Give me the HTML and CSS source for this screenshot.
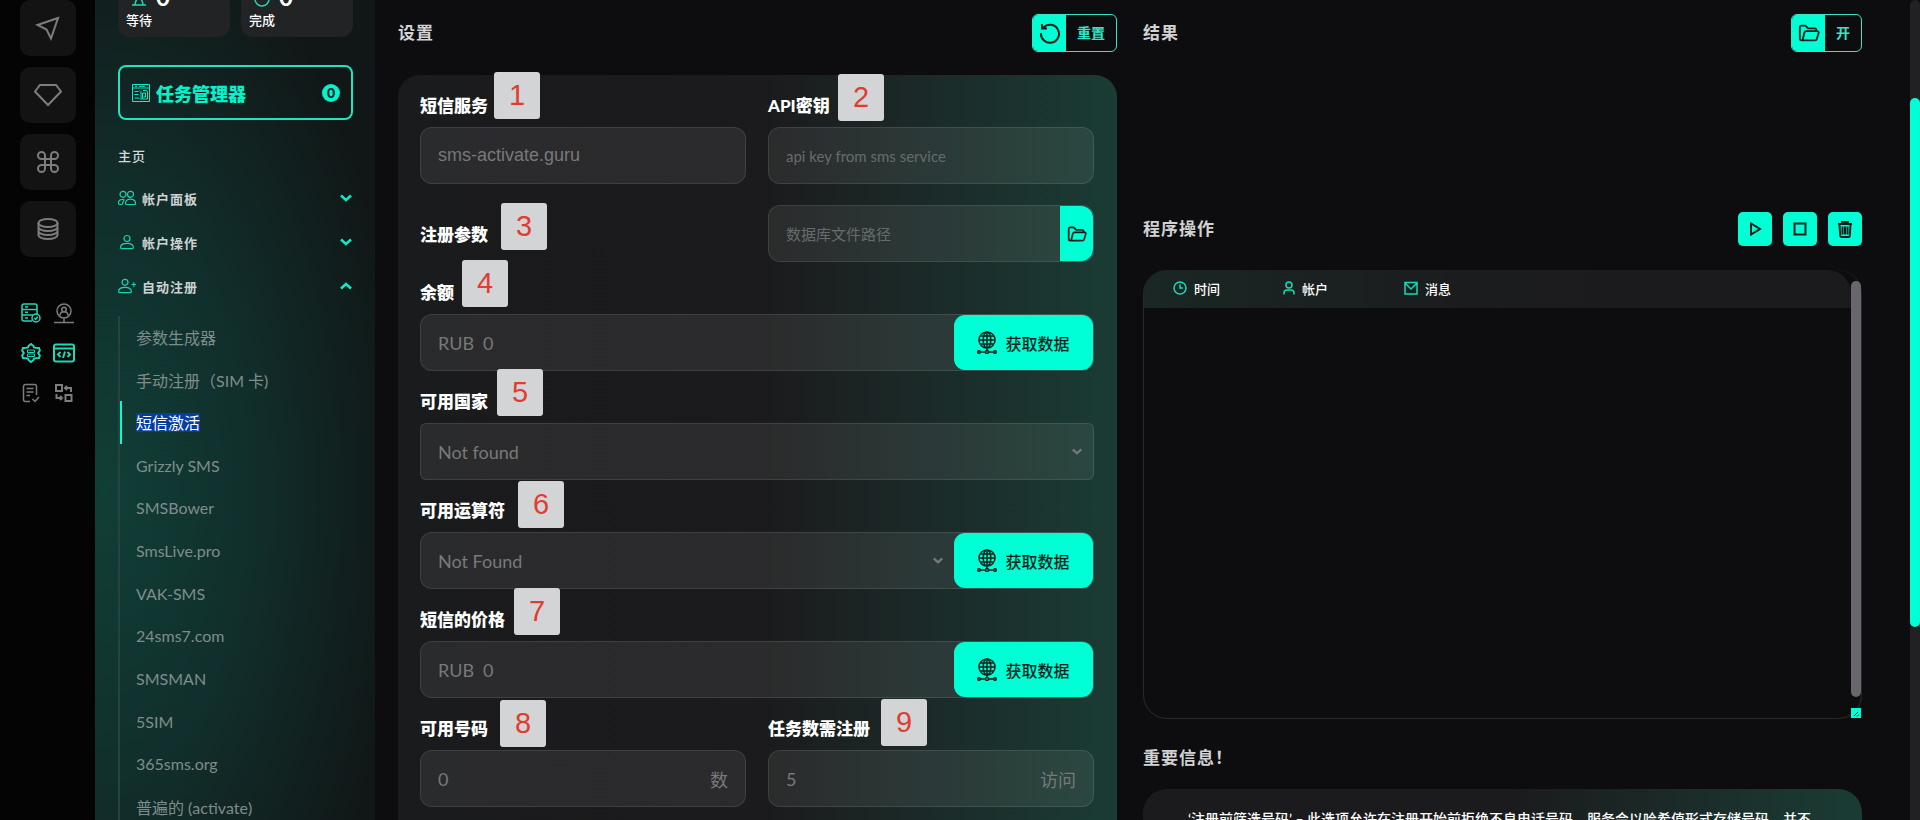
FILE: index.html
```html
<!DOCTYPE html>
<html lang="zh-CN">
<head>
    <meta charset="UTF-8">
    <meta name="viewport" content="width=device-width, initial-scale=1.0">
    <title>短信激活</title>
    <link rel="stylesheet" href="styles.css">
</head>
<body>
    <svg class="sprite" aria-hidden="true">
        <symbol id="i-folder" viewBox="0 0 24 24"><path d="M5 20H4a2 2 0 0 1-2-2V6a2 2 0 0 1 2-2h4l3 3h7a2 2 0 0 1 2 2v1M5 20l2-8.500a2 2 0 0 1 2-1.500h12a1.500 1.500 0 0 1 1.500 2L20.500 18.500a2 2 0 0 1-2 1.500H5z"/></symbol>
        <symbol id="i-down" viewBox="0 0 14 8"><path d="M2 1.500l5 4.500 5-4.500"/></symbol>
        <symbol id="i-up" viewBox="0 0 14 8"><path d="M2 6.500l5-4.500 5 4.500"/></symbol>
        <symbol id="i-user" viewBox="0 0 18 16"><circle cx="9" cy="4.500" r="3"/><path d="M2.600 13.600c0-3 2-4.300 6.400-4.300s6.400 1.300 6.400 4.300c0 .7-.5 1-1 1H3.600c-.5 0-1-.3-1-1z"/></symbol>
        <symbol id="i-globe" viewBox="0 0 20 23"><circle cx="10" cy="9" r="8"/><ellipse cx="10" cy="9" rx="3.800" ry="8"/><path d="M10 1v18.500M2 9h16M3.200 5h13.600M3.200 13h13.600M3.300 21h5.200M11.500 21h5.200"/><circle cx="2" cy="21" r="1.300"/><circle cx="10" cy="21" r="1.500"/><circle cx="18" cy="21" r="1.300"/></symbol>
    </svg>

    <div class="app">
        <nav class="rail">
            <a class="tile" href="#" aria-label="发送"><svg class="icon" width="26" height="26" viewBox="0 0 26 26"><path d="M23 3L2.500 10l9 4.500L16 23.500z"/></svg></a>
            <a class="tile" href="#" aria-label="高级"><svg class="icon" width="28" height="24" viewBox="0 0 28 24"><path d="M6 2h16l5 6.500L14 22 1 8.500z"/></svg></a>
            <a class="tile" href="#" aria-label="命令"><svg class="icon" width="22" height="22" viewBox="0 0 22 22"><path d="M8 8V4.500A3.500 3.500 0 1 0 4.500 8h13A3.500 3.500 0 1 0 14 4.500v13a3.500 3.500 0 1 0 3.500-3.500h-13A3.500 3.500 0 1 0 8 17.500z"/></svg></a>
            <a class="tile" href="#" aria-label="数据库"><svg class="icon" width="22" height="24" viewBox="0 0 22 24"><ellipse cx="11" cy="6" rx="9.500" ry="4"/><path d="M1.500 6v12c0 2.200 4 4 9.500 4s9.500-1.800 9.500-4V6M1.500 10c0 2.200 4 4 9.500 4s9.500-1.800 9.500-4M1.500 14c0 2.200 4 4 9.500 4s9.500-1.800 9.500-4"/></svg></a>

            <div class="tools">
                <svg class="icon on" width="20" height="20" viewBox="0 0 20 20"><path d="M11 18H3a2 2 0 0 1-2-2V3a2 2 0 0 1 2-2h11a2 2 0 0 1 2 2v8M1 6.500h15M1 12h11M4 4h3M4 9.300h3M4 15h3"/><circle cx="15" cy="15" r="4"/><path d="M13.300 15l1.300 1.300 2.200-2.500"/></svg>
                <svg class="icon" width="20" height="21" viewBox="0 0 20 21"><circle cx="10" cy="8" r="7"/><circle cx="10" cy="6.500" r="2.300"/><path d="M6 12.500c0-5 8-5 8 0M10 15v4M0 19.500h20M8.500 19.500h3"/></svg>
                <svg class="icon on thick" width="20" height="20" viewBox="0 0 20 20"><path d="M7.500 3L10 1l2.500 2 .5 1.500 1.500.3L18 5l.8 2.500L17.200 10l1.600 2.500L18 15l-3.500.2-1.500.3-.5 1.500L10 19l-2.500-2-.5-1.500-1.500-.3L2 15l-.8-2.500L2.800 10 1.200 7.500 2 5l3.500-.2L7 4.500z"/><path class="fine" d="M6.500 7h7v2.500h-7zM6.500 11h7v2.500h-7z"/></svg>
                <svg class="icon on thick" width="22" height="20" viewBox="0 0 22 20"><rect x="1" y="1.500" width="20" height="17" rx="2"/><path d="M1 5.500h20M7.500 9L5 11.500 7.500 14M14.500 9l2.500 2.500-2.500 2.500M12 8.500L10 15"/></svg>
                <svg class="icon" width="20" height="20" viewBox="0 0 20 20"><path d="M9 18.500H4.500a2 2 0 0 1-2-2v-13a2 2 0 0 1 2-2h9a2 2 0 0 1 2 2V12M5.500 5.500h7M5.500 9h7M5.500 12.500H9M11.500 16l2.500 2.500 4-4.500"/></svg>
                <svg class="icon thick" width="20" height="20" viewBox="0 0 20 20"><path d="M2 2h6v6H2zM11.500 12h6v6h-6zM11 5h6v4M13 3l-2 2 2 2M2.500 11v4h5M6 13l2 2-2 2"/></svg>
            </div>
        </nav>

        <aside class="sidebar">
            <div class="cards">
                <div class="card">
                    <div class="card-top"><svg class="icon" width="18" height="20" viewBox="0 0 18 20"><path d="M2 2h14M2 18h14M5 2c0 9 8 7 8 16M13 2c0 9-8 7-8 16"/></svg><b>0</b></div>
                    等待
                </div>
                <div class="card">
                    <div class="card-top"><svg class="icon" width="18" height="20" viewBox="0 0 18 20"><circle cx="9" cy="12" r="7"/></svg><b>0</b></div>
                    完成
                </div>
            </div>

            <button class="task-manager" type="button">
                <svg class="icon" width="18" height="18" viewBox="0 0 18 18"><path d="M.5.500h17v17H.5zM.5 4h17M3 2.300h2M7 2.300h6M2.500 7.500h4l1-1M2.500 10.500h4M2.500 14h4l1 1M9 7v9M11 6.500h3.500l1 1.500v7h-5V9h3v4h-2"/></svg>
                <span>任务管理器</span>
                <b class="count">0</b>
            </button>

            <h2 class="menu-title">主页</h2>
            <button class="group" type="button">
                <svg class="icon" width="18" height="16" viewBox="0 0 18 16"><circle cx="5" cy="4.300" r="3"/><circle cx="12.500" cy="4.300" r="3"/><path d="M7.500 13.500c0-3 2-4.300 5-4.300s5 1.300 5 4.300c0 .7-.5 1-1 1h-8c-.5 0-1-.3-1-1zM6.500 9.300C2.500 9 .5 10.500.5 13c0 1 .4 1.500 1.200 1.500H4L6 10"/></svg>
                <span>帐户面板</span>
                <svg class="icon chevron" width="14" height="8"><use href="#i-down"/></svg>
            </button>
            <button class="group" type="button">
                <svg class="icon" width="18" height="16"><use href="#i-user"/></svg>
                <span>帐户操作</span>
                <svg class="icon chevron" width="14" height="8"><use href="#i-down"/></svg>
            </button>
            <button class="group" type="button">
                <svg class="icon" width="18" height="16" viewBox="0 0 18 16"><circle cx="7" cy="4.300" r="3"/><path d="M.6 13.600c0-3 2-4.300 6.400-4.300s6.400 1.300 6.400 4.300c0 .7-.5 1-1 1H1.600c-.5 0-1-.3-1-1zM13.500 6.500h4.500M15.800 4.300v4.500"/></svg>
                <span>自动注册</span>
                <svg class="icon chevron" width="14" height="8"><use href="#i-up"/></svg>
            </button>

            <ul class="submenu">
                <li><a href="#">参数生成器</a></li>
                <li><a href="#">手动注册（SIM 卡)</a></li>
                <li class="active"><a href="#"><mark>短信激活</mark></a></li>
                <li><a href="#">Grizzly SMS</a></li>
                <li><a href="#">SMSBower</a></li>
                <li><a href="#">SmsLive.pro</a></li>
                <li><a href="#">VAK-SMS</a></li>
                <li><a href="#">24sms7.com</a></li>
                <li><a href="#">SMSMAN</a></li>
                <li><a href="#">5SIM</a></li>
                <li><a href="#">365sms.org</a></li>
                <li><a href="#">普遍的 (activate)</a></li>
            </ul>
        </aside>

        <main class="content">
            <section class="column">
                <header class="head">
                    <h1>设置</h1>
                    <button class="split-button" type="button">
                        <span class="split-icon"><svg class="icon" width="22" height="22" viewBox="0 0 22 22"><path d="M4.500 5.500A9 9 0 1 1 2 11M3 2v4.500h5"/></svg></span>
                        <span class="split-text">重置</span>
                    </button>
                </header>

                <form class="panel">
                    <div class="row two">
                        <div class="field">
                            <label for="service">短信服务</label>
                            <div class="box"><input class="arial" id="service" type="text" value="sms-activate.guru" readonly></div>
                        </div>
                        <div class="field">
                            <label for="key">API密钥</label>
                            <div class="box"><input class="small" id="key" type="text" placeholder="api key from sms service"></div>
                        </div>
                    </div>

                    <div class="row two params">
                        <label for="path">注册参数</label>
                        <div class="box">
                            <input class="small" id="path" type="text" placeholder="数据库文件路径">
                            <button class="folder-button" type="button" aria-label="选择文件"><svg class="icon" width="22" height="20"><use href="#i-folder"/></svg></button>
                        </div>
                    </div>

                    <div class="field">
                        <label for="balance">余额</label>
                        <div class="box">
                            <span class="prefix">RUB</span>
                            <input id="balance" type="text" value="0" readonly>
                            <button class="fetch" type="button"><svg class="icon" width="20" height="23"><use href="#i-globe"/></svg>获取数据</button>
                        </div>
                    </div>

                    <div class="field">
                        <label for="country">可用国家</label>
                        <div class="box square">
                            <select id="country"><option>Not found</option></select>
                            <svg class="icon caret" width="12" height="7"><use href="#i-down"/></svg>
                        </div>
                    </div>

                    <div class="field">
                        <label for="operator">可用运算符</label>
                        <div class="box">
                            <select id="operator"><option>Not Found</option></select>
                            <svg class="icon caret" width="12" height="7"><use href="#i-down"/></svg>
                            <button class="fetch" type="button"><svg class="icon" width="20" height="23"><use href="#i-globe"/></svg>获取数据</button>
                        </div>
                    </div>

                    <div class="field">
                        <label for="price">短信的价格</label>
                        <div class="box">
                            <span class="prefix">RUB</span>
                            <input id="price" type="text" value="0" readonly>
                            <button class="fetch" type="button"><svg class="icon" width="20" height="23"><use href="#i-globe"/></svg>获取数据</button>
                        </div>
                    </div>

                    <div class="row two">
                        <div class="field">
                            <label for="numbers">可用号码</label>
                            <div class="box"><input id="numbers" type="text" value="0"><span class="suffix">数</span></div>
                        </div>
                        <div class="field">
                            <label for="tasks">任务数需注册</label>
                            <div class="box"><input id="tasks" type="text" value="5"><span class="suffix">访问</span></div>
                        </div>
                    </div>

                    <!-- numbered notes over the form -->
                    <span class="note note-1">1</span>
                    <span class="note note-2">2</span>
                    <span class="note note-3">3</span>
                    <span class="note note-4">4</span>
                    <span class="note note-5">5</span>
                    <span class="note note-6">6</span>
                    <span class="note note-7">7</span>
                    <span class="note note-8">8</span>
                    <span class="note note-9">9</span>
                </form>
            </section>

            <section class="column">
                <header class="head result-head">
                    <h1>结果</h1>
                    <button class="split-button" type="button">
                        <span class="split-icon"><svg class="icon" width="22" height="22"><use href="#i-folder"/></svg></span>
                        <span class="split-text">开</span>
                    </button>
                </header>

                <header class="head">
                    <h1>程序操作</h1>
                    <div class="actions">
                        <button type="button" aria-label="开始"><svg class="icon" width="14" height="14" viewBox="0 0 14 14"><path d="M3 1.500v11L12 7z"/></svg></button>
                        <button type="button" aria-label="停止"><svg class="icon" width="14" height="14" viewBox="0 0 14 14"><path d="M1.500 1.500h11v11h-11z"/></svg></button>
                        <button type="button" aria-label="删除"><svg class="icon" width="16" height="18" viewBox="0 0 16 18"><path d="M1 4h14M5 4V2h6v2M2.500 4.500l.7 11a1.500 1.500 0 0 0 1.500 1.500h6.600a1.500 1.500 0 0 0 1.500-1.500l.7-11M5.500 6.500v8M8 6.500v8M10.500 6.500v8"/></svg></button>
                    </div>
                </header>

                <div class="log-wrap">
                    <div class="log">
                        <table>
                            <thead>
                                <tr>
                                    <th class="col-time"><span><svg class="icon" width="14" height="14" viewBox="0 0 14 14"><circle cx="7" cy="7" r="6"/><path d="M7 3.500V7h3"/></svg>时间</span></th>
                                    <th class="col-user"><span><svg class="icon" width="12" height="14" viewBox="0 0 12 14"><circle cx="6" cy="4" r="3"/><path d="M1 13.500V12c0-2 1.500-3 3-3h4c1.500 0 3 1 3 3v1.500"/></svg>帐户</span></th>
                                    <th><span><svg class="icon" width="14" height="14" viewBox="0 0 14 14"><path d="M1 1.500h12v11.500H1zM1 2l6 6 6-6"/></svg>消息</span></th>
                                </tr>
                            </thead>
                        </table>
                    </div>
                    <div class="log-bar"></div>
                    <div class="log-grip"><svg class="icon" width="10" height="10" viewBox="0 0 10 10"><path d="M3 8l4-4M6 8.500L8 6.500"/></svg></div>
                </div>

                <h1 class="info-title">重要信息！</h1>
                <div class="info">
                    <p>‘注册前筛选号码’ – 此选项允许在注册开始前拒绝不良电话号码，服务会以哈希值形式存储号码，并不</p>
                </div>
            </section>
        </main>

        <div class="page-bar"><div class="page-thumb"></div></div>
    </div>
</body>
</html>
```
FILE: styles.css
```css
* {
    box-sizing: border-box;
}

body {
    margin: 0;
    background-color: #0d0d10;
    color: #fff;
    font-family: Lato, 'Noto Sans CJK SC', sans-serif;
    font-size: 16px;
}

h1, h2, p, ul {
    margin: 0;
    padding: 0;
}

button, input, select {
    font-family: inherit;
    border: none;
    background: none;
    padding: 0;
    margin: 0;
    color: inherit;
}

button {
    cursor: pointer;
}

a {
    color: inherit;
    text-decoration: none;
}

.sprite {
    position: absolute;
    width: 0;
    height: 0;
}

.icon {
    fill: none;
    stroke: currentColor;
    stroke-width: 1.5;
    flex: none;
}

.app {
    display: flex;
    height: 100vh;
    overflow: hidden;
}

/* left rail */
.rail {
    width: 95px;
    flex: none;
    display: flex;
    flex-direction: column;
    align-items: flex-start;
    gap: 11px;
    padding-left: 20px;
    background-color: #040404;
    color: #7d7d7d;
}

.tile {
    width: 56px;
    height: 56px;
    flex: none;
    display: flex;
    justify-content: center;
    align-items: center;
    border-radius: 10px;
    background-color: #131313;
}

.tile .icon {
    stroke-width: 2;
}

.tools {
    display: grid;
    grid-template-columns: 22px 22px;
    grid-auto-rows: 22px;
    gap: 18px 11px;
    place-items: center;
    margin-top: 34px;
}

.tools .on {
    color: #1fd8b6;
}

.tools .thick {
    stroke-width: 2;
}

.tools .fine {
    stroke-width: 1;
}

/* sidebar */
.sidebar {
    width: 280px;
    flex: none;
    padding: 0 22px 0 23px;
    background: radial-gradient(ellipse 300px 600px at 10px 60%, #103f37 0%, #112e2b 50%, #111717 100%);
}

.cards {
    display: grid;
    grid-template-columns: 1fr 1fr;
    gap: 11px;
    margin-top: -32px;
}

.card {
    padding: 16px 8px 7px;
    border-radius: 12px;
    background-color: #212325;
    font-size: 13px;
    font-weight: 500;
    line-height: 20px;
}

.card-top {
    display: flex;
    align-items: center;
    gap: 8px;
    height: 26px;
    padding-left: 4px;
    color: #1fd8b6;
}

.card-top b {
    color: #fff;
    font-size: 24px;
    line-height: 26px;
}

.task-manager {
    display: flex;
    align-items: center;
    gap: 6px;
    width: 100%;
    height: 55px;
    margin-top: 28px;
    padding: 0 11px 0 12px;
    border: 2px solid #20e3c0;
    border-radius: 8px;
    color: #04f3cc;
    font-size: 18px;
    font-weight: 900;
}

.task-manager .icon {
    stroke-width: 1;
}

.count {
    width: 18px;
    height: 18px;
    margin-left: auto;
    border-radius: 50%;
    background-color: #04f3cc;
    color: #10201e;
    font-size: 14px;
    line-height: 18px;
    text-align: center;
}

.menu-title {
    margin: 26px 0 9px;
    color: #d5dad9;
    font-size: 13px;
    font-weight: 500;
    line-height: 21px;
    letter-spacing: 1px;
}

.group {
    display: flex;
    align-items: center;
    gap: 6px;
    width: 100%;
    height: 44px;
    color: #cdd3d2;
    font-size: 13px;
    font-weight: 700;
    letter-spacing: 1px;
}

.group .icon {
    color: #1fd0ad;
    stroke-width: 1.2;
}

.group .chevron {
    margin-left: auto;
    color: #10e8c4;
    stroke-width: 2.5;
}

.submenu {
    display: grid;
    grid-auto-rows: 1fr;
    height: 512px;
    margin-top: 8px;
    border-left: 2px solid #26433f;
    list-style: none;
    color: #7f8d8a;
}

.submenu li {
    display: flex;
    align-items: center;
    padding-left: 14px;
    border-left: 2px solid transparent;
}

.submenu .active {
    border-color: #00ffd5;
}

.submenu mark {
    background-color: #043e9f;
    color: #fff;
    line-height: 19px;
    display: block;
}

/* main area */
.content {
    flex: 1;
    display: grid;
    grid-template-columns: 1fr 1fr;
    gap: 26px;
    padding: 14px 48px 0 23px;
}

.column {
    display: flex;
    flex-direction: column;
    min-width: 0;
}

.head {
    display: flex;
    justify-content: space-between;
    align-items: center;
}

h1 {
    color: #d2d2d3;
    font-size: 17px;
    font-weight: 600;
    line-height: 24px;
    letter-spacing: 1px;
}

.split-button {
    display: flex;
    height: 38px;
    border: 1px solid #34e6c5;
    border-radius: 6px;
    overflow: hidden;
    color: #34e6c5;
    font-size: 14px;
    font-weight: 700;
}

.split-icon {
    display: flex;
    justify-content: center;
    align-items: center;
    width: 33px;
    height: 36px;
    background-color: #00ffd5;
    color: #08201c;
}

.split-icon .icon {
    stroke-width: 2;
}

.split-text {
    padding: 0 11px;
    line-height: 36px;
}

.panel {
    position: relative;
    display: flex;
    flex-direction: column;
    gap: 20px;
    margin-top: 23px;
    padding: 20px 23px 22px 22px;
    border-radius: 22px 22px 0 0;
    background: linear-gradient(90deg, #1a1b1c 0%, #1b1a1c 50%, #1b2b29 75%, #1a3c34 100%);
}

.two {
    display: grid;
    grid-template-columns: 1fr 1fr;
    gap: 22px;
}

.params {
    height: 58px;
    align-items: end;
}

.params label {
    align-self: end;
    margin-bottom: 16px;
}

.field {
    display: flex;
    flex-direction: column;
    gap: 10px;
}

label {
    font-size: 17px;
    font-weight: 900;
    line-height: 22px;
}

.box {
    display: flex;
    align-items: center;
    height: 57px;
    padding-left: 17px;
    border: 1px solid rgba(255, 255, 255, 0.1);
    border-radius: 12px;
    background-color: rgba(255, 255, 255, 0.07);
    color: #77797a;
    font-size: 18px;
}

.box.square {
    border-radius: 6px;
}

.box input, .box select {
    flex: 1;
    min-width: 0;
    height: 100%;
    font-size: 18px;
    outline: none;
    appearance: none;
}

.box .arial {
    font-family: 'Liberation Sans', sans-serif;
}

.box .small {
    font-size: 15px;
}

.box input::placeholder {
    color: #656d6c;
}

.prefix {
    margin-right: 9px;
}

.suffix {
    padding: 0 17px;
}

.caret {
    margin: 0 10px;
    stroke-width: 2.5;
}

.folder-button {
    display: flex;
    justify-content: center;
    align-items: center;
    width: 33px;
    height: 55px;
    border-radius: 0 12px 12px 0;
    background-color: #00ffd5;
    color: #08201c;
}

.folder-button .icon {
    stroke-width: 2;
}

.fetch {
    display: flex;
    justify-content: center;
    align-items: center;
    gap: 8px;
    width: 139px;
    height: 55px;
    border-radius: 11px;
    background-color: #00ffd5;
    color: #06231e;
    font-size: 16px;
    font-weight: 500;
}

.note {
    position: absolute;
    width: 46px;
    height: 47px;
    border-radius: 3px;
    background-color: #d3d4d5;
    color: #e03c31;
    font-family: 'Liberation Sans', sans-serif;
    font-size: 29px;
    line-height: 47px;
    text-align: center;
}

.note-1 { left: 96px; top: -3px; }
.note-2 { left: 440px; top: -1px; }
.note-3 { left: 103px; top: 128px; }
.note-4 { left: 64px; top: 185px; }
.note-5 { left: 99px; top: 294px; }
.note-6 { left: 120px; top: 406px; }
.note-7 { left: 116px; top: 513px; }
.note-8 { left: 102px; top: 625px; }
.note-9 { left: 483px; top: 624px; }

/* results */
.result-head {
    margin-bottom: 160px;
}

.actions {
    display: flex;
    gap: 11px;
}

.actions button {
    display: flex;
    justify-content: center;
    align-items: center;
    width: 34px;
    height: 34px;
    border-radius: 5px;
    background-color: #00ffd5;
    color: #08201c;
}

.actions .icon {
    stroke-width: 2;
}

.log-wrap {
    position: relative;
    margin-top: 24px;
}

.log {
    height: 449px;
    border: 1px solid #29292c;
    border-top: none;
    border-radius: 24px;
    overflow: hidden;
}

.log table {
    width: calc(100% - 10px);
    border-collapse: collapse;
    table-layout: fixed;
    border-radius: 0 24px 0 0;
    background: linear-gradient(90deg, #1a2724 0%, #1b1c1e 45%, #1b1a1d 100%);
}

.log th {
    height: 38px;
    padding: 0 0 2px;
    font-size: 13px;
    font-weight: 500;
    text-align: left;
}

.log th span {
    display: flex;
    align-items: center;
    gap: 7px;
}

.log th .icon {
    color: #17dbb6;
}

.log .col-time {
    width: 139px;
    padding-left: 29px;
}

.log .col-user {
    width: 121px;
}

.log-bar {
    position: absolute;
    top: 11px;
    right: 1px;
    width: 10px;
    height: 416px;
    border-radius: 5px;
    background-color: #69676b;
}

.log-grip {
    position: absolute;
    right: 1px;
    bottom: 1px;
    width: 10px;
    height: 10px;
    background-color: #00ffd5;
    color: #08201c;
}

.log-grip .icon {
    display: block;
    stroke-width: 1;
}

.info-title {
    margin: 27px 0 19px;
}

.info {
    flex: 1 0 auto;
    padding: 18px 30px 30px 45px;
    border-radius: 24px 24px 0 0;
    background: linear-gradient(90deg, #1b1b1d 0%, #1b1a1c 50%, #1b2b29 75%, #1a3c34 100%);
    font-size: 14px;
    font-weight: 500;
    line-height: 24px;
}

/* page scrollbar */
.page-bar {
    width: 10px;
    flex: none;
    padding-top: 98px;
    border-radius: 5px 5px 0 0;
    background-color: #212123;
}

.page-thumb {
    height: 529px;
    border-radius: 5px;
    background-color: #00ffd5;
}
```
